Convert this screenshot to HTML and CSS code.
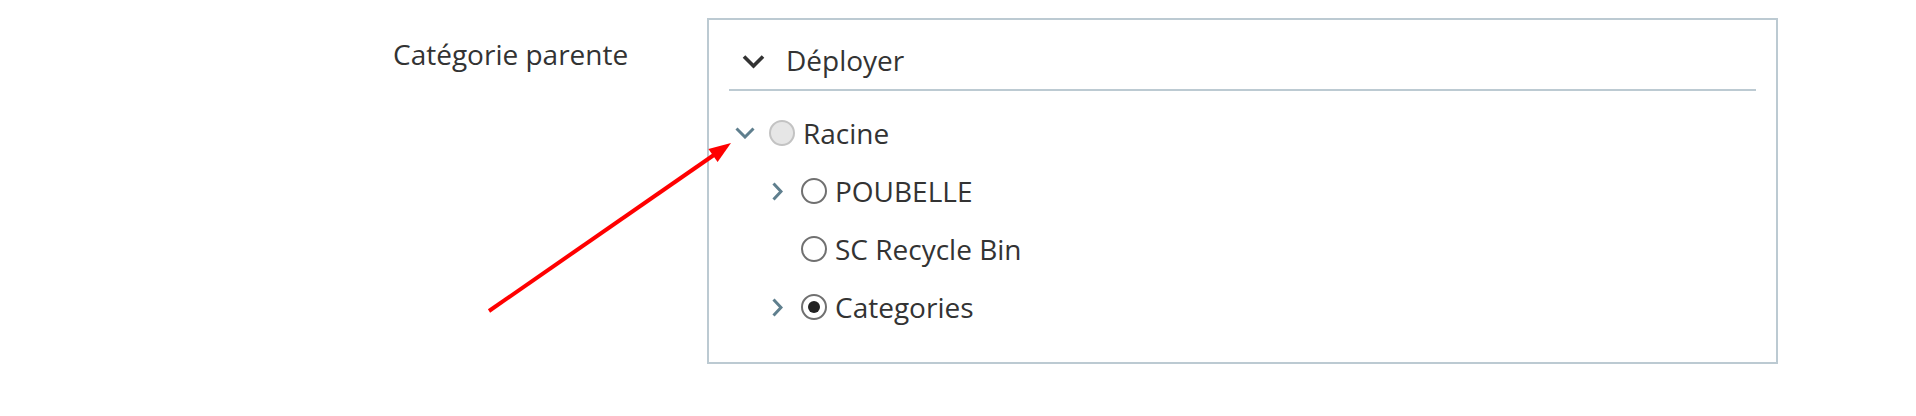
FILE: index.html
```html
<!DOCTYPE html>
<html lang="fr">
<head>
<meta charset="utf-8">
<title>Catégorie parente</title>
<link rel="stylesheet" href="styles.css">
</head>
<body>
<div class="page">
  <div class="field">
    <div class="field-label">Catégorie parente</div>
    <div class="tree-box">
      <div class="tree-header">
        <svg class="hdr-chev" width="23" height="15" viewBox="0 0 23 15"><path d="M2 2.5 L11.5 12 L21 2.5" fill="none" stroke="#333" stroke-width="3.6"/></svg>
        <span class="hdr-text">Déployer</span>
      </div>
      <ul class="tree">
        <li class="node lvl0">
          <span class="toggle"><svg width="20" height="12" viewBox="0 0 20 12"><path d="M1.5 1.5 L10 10 L18.5 1.5" fill="none" stroke="#5f7f8e" stroke-width="3"/></svg></span>
          <span class="radio disabled"></span>
          <span class="node-text">Racine</span>
        </li>
        <li class="node lvl1">
          <span class="toggle"><svg width="11" height="19" viewBox="0 0 11 19"><path d="M1.5 1.5 L9 9.5 L1.5 17.5" fill="none" stroke="#5f7f8e" stroke-width="3"/></svg></span>
          <span class="radio"></span>
          <span class="node-text">POUBELLE</span>
        </li>
        <li class="node lvl1">
          <span class="toggle"></span>
          <span class="radio"></span>
          <span class="node-text">SC Recycle Bin</span>
        </li>
        <li class="node lvl1">
          <span class="toggle"><svg width="11" height="19" viewBox="0 0 11 19"><path d="M1.5 1.5 L9 9.5 L1.5 17.5" fill="none" stroke="#5f7f8e" stroke-width="3"/></svg></span>
          <span class="radio checked"></span>
          <span class="node-text">Categories</span>
        </li>
      </ul>
    </div>
  </div>
</div>
<svg class="annotation" width="1916" height="416" viewBox="0 0 1916 416">
  <line x1="489" y1="311" x2="716" y2="153.5" stroke="#ff0000" stroke-width="4"/>
  <polygon points="731,143 717.6,162 708.4,149" fill="#ff0000"/>
</svg>
</body>
</html>
```
FILE: styles.css
```css
html, body {
  margin: 0;
  padding: 0;
  background: #ffffff;
}
body {
  font-family: "Open Sans", "Noto Sans", sans-serif;
  color: #333333;
  position: relative;
  width: 1916px;
  height: 416px;
  overflow: hidden;
}
.page {
  padding: 18px 0 0 393px;
}
.field {
  display: flex;
  align-items: flex-start;
}
.field-label {
  width: 314px;
  font-size: 28px;
  line-height: 38px;
  margin-top: 17px;
}
.tree-box {
  box-sizing: border-box;
  width: 1071px;
  height: 346px;
  border: 2px solid #bccad2;
  padding: 0 20px;
}
.tree-header {
  display: flex;
  align-items: center;
  box-sizing: border-box;
  height: 71px;
  padding-top: 10px;
  border-bottom: 2px solid #bccad2;
  padding-left: 13px;
}
.hdr-chev {
  display: block;
  margin-top: 4px;
}
.hdr-text {
  font-size: 28px;
  margin-left: 21px;
  line-height: 38px;
}
.tree {
  list-style: none;
  margin: 0;
  padding: 13px 0 0 0;
}
.node {
  display: flex;
  align-items: center;
  height: 58px;
}
.lvl1 {
  padding-left: 32px;
}
.toggle {
  width: 32px;
  height: 20px;
  display: flex;
  align-items: center;
  justify-content: center;
  margin-right: 8px;
}
.toggle svg {
  display: block;
}
.radio {
  width: 26px;
  height: 26px;
  box-sizing: border-box;
  border: 2.5px solid #707070;
  border-radius: 50%;
  background: #ffffff;
  display: flex;
  align-items: center;
  justify-content: center;
}
.radio.disabled {
  border-color: #c3c3c3;
  background: #e6e6e6;
}
.radio.checked::after {
  content: "";
  width: 12px;
  height: 12px;
  border-radius: 50%;
  background: #222222;
}
.node-text {
  font-size: 28px;
  line-height: 38px;
  margin-left: 8px;
}
.annotation {
  position: absolute;
  top: 0;
  left: 0;
  pointer-events: none;
}
```
